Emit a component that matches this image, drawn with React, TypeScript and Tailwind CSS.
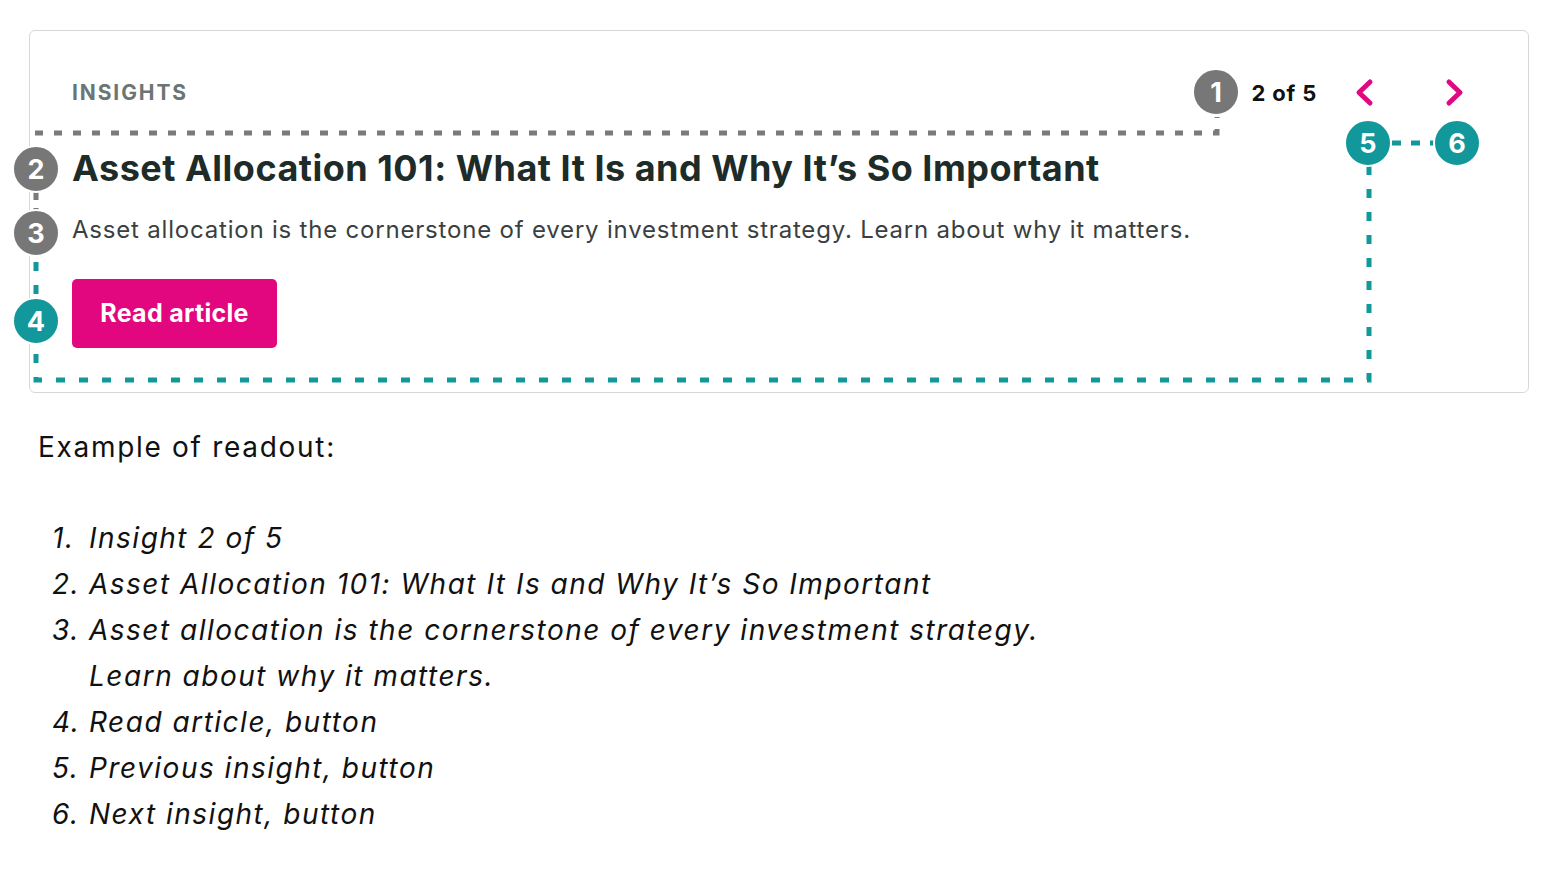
import React from 'react';

const font = { fontFamily: 'Inter, Lato, sans-serif' };

const readout = [
  'Insight 2 of 5',
  'Asset Allocation 101: What It Is and Why It\u2019s So Important',
  'Asset allocation is the cornerstone of every investment strategy. Learn about why it matters.',
  'Read article, button',
  'Previous insight, button',
  'Next insight, button',
];

function Badge({ n, tone, className }: { n: number; tone: 'gray' | 'teal'; className: string }) {
  return (
    <div
      className={`absolute w-12 h-12 rounded-full border-2 border-white flex items-center justify-center text-white font-bold text-[27px] leading-none ${
        tone === 'gray' ? 'bg-[#777777]' : 'bg-[#12979a]'
      } ${className}`}
    >
      {n}
    </div>
  );
}

function Chevron({ dir }: { dir: 'left' | 'right' }) {
  return (
    <svg width="24" height="30" viewBox="0 0 24 30" fill="none">
      <polyline
        points={dir === 'left' ? '16,4 5,14.5 16,25' : '8,4 19,14.5 8,25'}
        stroke="#df0a82"
        strokeWidth="5"
        strokeLinecap="round"
        strokeLinejoin="round"
      />
    </svg>
  );
}

export default function App() {
  return (
    <div className="relative min-h-[871px] bg-white text-black" style={font}>
      <div className="px-[29px] pt-[30px]">
        {/* Card */}
        <div className="w-[1500px] rounded-md border border-[#d6d8d8] pl-[42px] pr-[55px] pt-[38px] pb-[44px]">
          <div className="flex items-center justify-between h-12">
            <span className="text-[21px] font-bold tracking-[1.9px] text-[#6b7573]">INSIGHTS</span>
            <div className="flex items-center">
              <span className="text-[22px] font-bold tracking-[0.8px] text-[#111] mr-[29px]">2 of 5</span>
              <button className="w-10 h-10 flex items-center justify-center" aria-label="Previous insight">
                <Chevron dir="left" />
              </button>
              <button className="w-10 h-10 flex items-center justify-center ml-[47px]" aria-label="Next insight">
                <Chevron dir="right" />
              </button>
            </div>
          </div>
          <h2 className="mt-[30px] text-[36px] leading-[1.2] font-bold tracking-[0.5px] text-[#1d2b29]">
            Asset Allocation 101: What It Is and Why It’s So Important
          </h2>
          <p className="mt-[26px] text-[24px] leading-[1.2] tracking-[0.8px] text-[#3a3f3f]">
            Asset allocation is the cornerstone of every investment strategy. Learn about why it matters.
          </p>
          <button className="mt-[34px] w-[205px] h-[69px] rounded-[5px] bg-[#e2077f] text-white text-[25px] font-bold tracking-[0.3px]">
            Read article
          </button>
        </div>

        {/* Readout */}
        <p className="mt-[38px] ml-[9px] text-[28px] leading-[1.2] tracking-[1.7px] text-[#111]">Example of readout:</p>
        <ol className="mt-[50px] ml-[23px] text-[28px] leading-[46px] italic tracking-[1.5px] text-[#111]">
          {readout.map((t, i) => (
            <li key={i} className="flex">
              <span className="w-[37px] shrink-0">{i + 1}.</span>
              <span className="max-w-[1000px]">{t}</span>
            </li>
          ))}
        </ol>
      </div>

      {/* Annotation overlay */}
      <svg className="absolute inset-0 pointer-events-none" width="1560" height="871" fill="none">
        <path d="M35 133 H1217 V117" stroke="#7a7a7a" strokeWidth="5" strokeDasharray="8 11" />
        <path d="M36 192 V210" stroke="#7a7a7a" strokeWidth="5" strokeDasharray="8 8" />
        <path d="M1369 166 V380 H36 V256" stroke="#12979a" strokeWidth="5" strokeDasharray="9 14" />
        <path d="M1392 143 H1434" stroke="#12979a" strokeWidth="5" strokeDasharray="9 10" />
      </svg>
      <Badge n={1} tone="gray" className="left-[1192px] top-[68px]" />
      <Badge n={2} tone="gray" className="left-[12px] top-[145px]" />
      <Badge n={3} tone="gray" className="left-[12px] top-[209px]" />
      <Badge n={4} tone="teal" className="left-[12px] top-[297px]" />
      <Badge n={5} tone="teal" className="left-[1344px] top-[119px]" />
      <Badge n={6} tone="teal" className="left-[1433px] top-[119px]" />
    </div>
  );
}
